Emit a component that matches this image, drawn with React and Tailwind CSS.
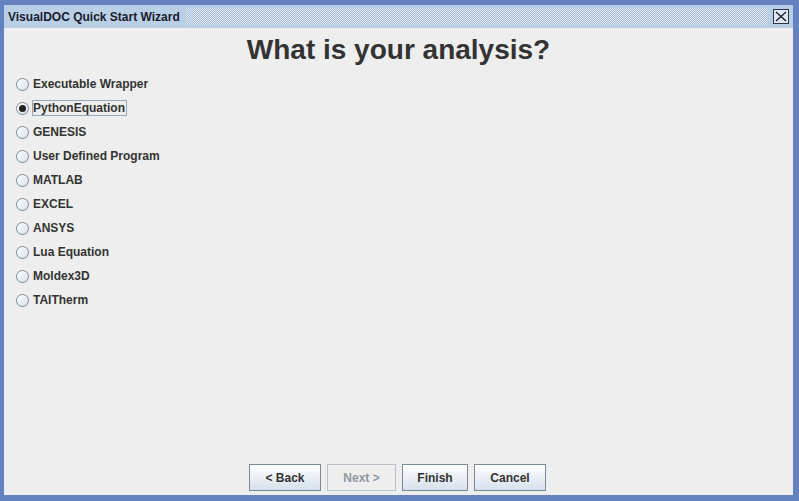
export default function App() {
  const options = [
    'Executable Wrapper',
    'PythonEquation',
    'GENESIS',
    'User Defined Program',
    'MATLAB',
    'EXCEL',
    'ANSYS',
    'Lua Equation',
    'Moldex3D',
    'TAITherm',
  ];
  const selected = 'PythonEquation';

  const buttons = [
    { label: '< Back', w: 'w-[72px]' },
    { label: 'Next >', w: 'w-[69px]', disabled: true },
    { label: 'Finish', w: 'w-[66px]' },
    { label: 'Cancel', w: 'w-[72px]' },
  ];

  return (
    <div className="w-[799px] h-[501px] bg-[#6382bf] pl-[4px] pt-[5px] pr-[6px] pb-[6px] font-['Liberation_Sans',Arial,sans-serif] text-[12px]">
      <div className="flex flex-col h-full">
        {/* title bar */}
        <div className="h-[23px] bg-[#b8cfe5] flex items-center pl-[4px] pr-[4px] gap-[5px]">
          <span className="font-bold text-[#1a1a2e] text-[12px] leading-none whitespace-nowrap">VisualDOC Quick Start Wizard</span>
          <div className="flex-1 h-[17px] bg-[repeating-conic-gradient(#dde7f3_0_25%,#a9c1dc_0_50%)] bg-[length:2px_2px]" />
          <div className="w-[16px] h-[15px] bg-[#dfe8f3] border border-[#2b3245] flex items-center justify-center">
            <svg width="12" height="11" viewBox="0 0 12 11">
              <path d="M1 1L11 10M11 1L1 10" stroke="#1b1b2a" strokeWidth="1.4" />
            </svg>
          </div>
        </div>

        {/* content */}
        <div className="flex-1 bg-[#eeeeee] flex flex-col">
          <h1 className="text-center font-bold text-[28px] leading-none text-[#333333] mt-[8px]">What is your analysis?</h1>

          <div className="flex flex-col mt-[8px] pl-[12px]">
            {options.map((opt) => {
              const on = opt === selected;
              return (
                <div key={opt} className="h-[24px] flex items-center gap-[3px]">
                  <div className="w-[13px] h-[13px] rounded-full border border-[#7a8a99] bg-[linear-gradient(135deg,#ffffff,#d8e2ee)] flex items-center justify-center">
                    {on && <div className="w-[7px] h-[7px] rounded-full bg-[#222]" />}
                  </div>
                  <span
                    className={
                      'font-bold text-[#333333] leading-[14px] pr-[1px] ' +
                      (on ? 'border border-[#99a8bb]' : 'border border-transparent')
                    }
                  >
                    {opt}
                  </span>
                </div>
              );
            })}
          </div>

          <div className="flex-1" />

          <div className="flex justify-center gap-[6px] pb-[4px] pr-[2px]">
            {buttons.map((b) => (
              <div
                key={b.label}
                className={
                  b.w +
                  ' h-[27px] flex items-center justify-center font-bold border ' +
                  (b.disabled
                    ? 'border-[#b8c1cc] text-[#8e98a3] bg-[#eeeeee]'
                    : 'border-[#7a8a99] text-[#333333] bg-[linear-gradient(#ffffff,#d6e0ec)]')
                }
              >
                {b.label}
              </div>
            ))}
          </div>
        </div>
      </div>
    </div>
  );
}
